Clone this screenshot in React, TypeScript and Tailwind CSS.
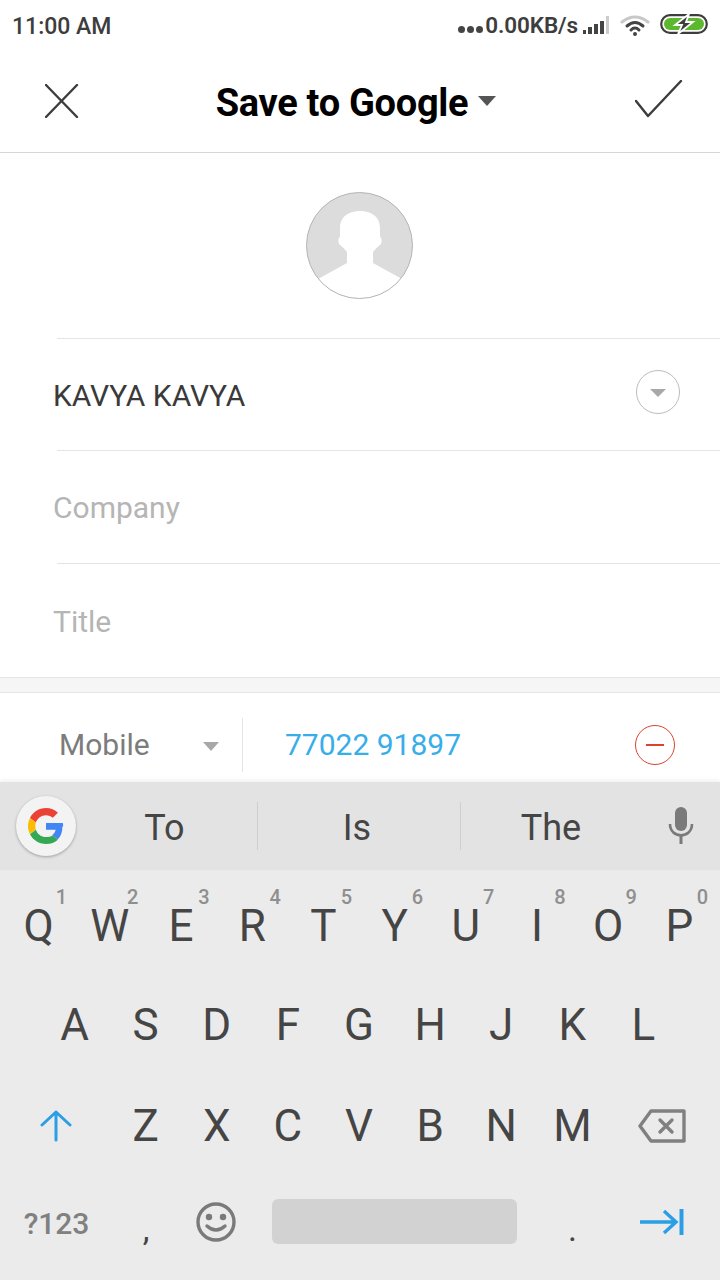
import React from "react"

const font = "font-['Roboto',sans-serif]"

function Key({ label, hint }: { label: string; hint?: string }) {
  return (
    <div className="relative flex-1 flex items-center justify-center text-[44px] leading-none text-[#454545]">
      {label}
      {hint && <span className="absolute top-[11px] right-[7px] text-[20px] leading-none font-medium text-[#8f8f8f]">{hint}</span>}
    </div>
  )
}

function StatusBar() {
  return (
    <div className="h-[52px] flex items-center justify-between pl-[12px] pr-[12px] text-[#3d3d3d] font-medium">
      <span className="text-[23px] mt-[2px]">11:00 AM</span>
      <div className="flex items-center">
        <div className="flex gap-[2px] mt-[6px] mr-[2px]">
          <div className="w-[7px] h-[7px] rounded-full bg-[#444]" />
          <div className="w-[7px] h-[7px] rounded-full bg-[#444]" />
          <div className="w-[7px] h-[7px] rounded-full bg-[#444]" />
        </div>
        <span className="text-[22.5px] font-semibold tracking-[-0.1px]">0.00KB/s</span>
        <svg width="28" height="22" viewBox="0 0 28 22" className="ml-[4px]">
          <rect x="1" y="15" width="3" height="4" fill="#444" />
          <rect x="6" y="12" width="4" height="7" fill="#444" />
          <rect x="12" y="9" width="4" height="10" fill="#444" />
          <rect x="18" y="6" width="4" height="13" fill="#444" />
          <rect x="24" y="1" width="3" height="18" fill="#ccc" />
        </svg>
        <svg width="30" height="24" viewBox="0 0 30 24" className="ml-[10px]" fill="none" strokeLinecap="round">
          <path d="M2 8 Q15 -2 28 8" stroke="#c8c8c8" strokeWidth="3" />
          <path d="M7 12 Q15 5 23 12" stroke="#444" strokeWidth="3" />
          <path d="M11 16 Q15 12 19 16" stroke="#444" strokeWidth="3" />
          <circle cx="15" cy="20" r="2" fill="#444" />
        </svg>
        <svg width="48" height="20" viewBox="0 0 48 20" className="ml-[10px] mt-[-4px]">
          <rect x="1.2" y="1.2" width="45.6" height="17.6" rx="8.800" fill="none" stroke="#3d3d3d" strokeWidth="2.200" />
          <rect x="4" y="4" width="40" height="12" rx="6" fill="#5cb82c" />
          <path d="M29 0 L15 11 H22 L18 20 L33 8 H26 Z" fill="#3d3d3d" stroke="#fff" strokeWidth="1.800" />
        </svg>
      </div>
    </div>
  )
}

function Header() {
  return (
    <div className="h-[101px] relative flex items-center justify-between pl-[45px] pr-[37px] border-b border-[#d6d6d6]">
      <svg width="34" height="34" viewBox="0 0 34 34" className="mt-[-2px]" stroke="#3c3c3c" strokeWidth="2.400" strokeLinecap="round">
        <path d="M1 1 L32 33 M32 1 L1 33" />
      </svg>
      <div className="flex items-center ml-[-2px] mt-[2px]">
        <span className="text-[38px] leading-none font-bold text-black tracking-[-0.3px]">Save to Google</span>
        <div className="ml-[10px] mb-[4px] w-0 h-0 border-x-[9px] border-x-transparent border-t-[10px] border-t-[#555]" />
      </div>
      <svg width="48" height="40" viewBox="0 0 48 40" className="mt-[-4px]" fill="none" stroke="#3c3c3c" strokeWidth="2.400" strokeLinecap="round" strokeLinejoin="round">
        <path d="M1 21 L13 36 L46 1" />
      </svg>
    </div>
  )
}

function Avatar() {
  return (
    <svg width="107" height="107" viewBox="0 0 107 107">
      <defs>
        <clipPath id="avatarClip"><circle cx="53.500" cy="53.500" r="53" /></clipPath>
      </defs>
      <g clipPath="url(#avatarClip)">
        <rect width="107" height="107" fill="#dcdcdc" />
        <path d="M54 19 C44 19 34 24 34 36 L34 45 C32 46 32 50 33 52 C36 55 39 57 41 60 L41 71 L12 87 L12 107 L96 107 L96 87 L67 71 L67 60 C69 57 72 55 75 52 C76 50 76 46 74 45 L74 36 C74 24 64 19 54 19 Z" fill="#fff" />
      </g>
      <circle cx="53.500" cy="53.500" r="53" fill="none" stroke="#b4b4b4" strokeWidth="1" />
    </svg>
  )
}

function FieldRow({ text, muted, height }: { text: string; muted?: boolean; height: string }) {
  return (
    <div className={`${height} ml-[57px] border-t border-[#e4e4e4] flex items-center justify-between pr-[40px]`}>
      <span className={`ml-[-4px] mt-[2px] text-[30px] leading-none ${muted ? "text-[#b5b5b5]" : "text-[#3a3a3a]"}`}>{text}</span>
      {!muted && (
        <div className="mt-[-6px] w-[44px] h-[44px] rounded-full border border-[#bdbdbd] flex items-center justify-center">
          <div className="mt-[2px] w-0 h-0 border-x-[8px] border-x-transparent border-t-[8px] border-t-[#a8a8a8]" />
        </div>
      )}
    </div>
  )
}

function SuggestionBar() {
  return (
    <div className="h-[88px] bg-[#e3e3e3] flex items-center relative shadow-[0_-2px_4px_rgba(0,0,0,0.06)]">
      <div className="ml-[16px] w-[60px] h-[60px] rounded-full bg-[#f3f3f3] shadow-[0_1px_3px_rgba(0,0,0,0.3)] flex items-center justify-center">
        <svg width="36" height="36" viewBox="0 0 48 48">
          <path fill="#EA4335" d="M24 9.500c3.500 0 6.700 1.300 9.100 3.600l6.800-6.800C35.800 2.500 30.300 0 24 0 14.600 0 6.500 5.400 2.600 13.200l7.900 6.100C12.400 13.700 17.700 9.500 24 9.500z" />
          <path fill="#4285F4" d="M46.900 24.500c0-1.600-.1-3.100-.4-4.500H24v9h12.900c-.6 3-2.200 5.500-4.700 7.200l7.300 5.700c4.300-4 6.400-9.800 6.400-17.400z" />
          <path fill="#FBBC05" d="M10.500 28.700c-.5-1.500-.8-3-.8-4.700s.3-3.200.8-4.700l-7.900-6.100C.9 16.500 0 20.100 0 24s.9 7.500 2.600 10.800l7.900-6.100z" />
          <path fill="#34A853" d="M24 48c6.500 0 11.900-2.100 15.900-5.800l-7.300-5.700c-2.200 1.500-5 2.300-8.600 2.300-6.300 0-11.600-4.200-13.500-9.900l-7.900 6.100C6.500 42.600 14.600 48 24 48z" />
        </svg>
      </div>
      <div className="flex-1 flex items-center text-[36px] text-[#454545] leading-none h-[48px]">
        <div className="w-[177px] flex justify-center pt-[4px]">To</div>
        <div className="ml-[4px] w-[204px] h-[48px] pr-[4px] border-x border-[#cfcfcf] flex items-center justify-center pt-[4px]">Is</div>
        <div className="w-[180px] flex justify-center pt-[4px]">The</div>
      </div>
      <svg width="30" height="38" viewBox="0 0 30 38" className="mr-[24px]" fill="none">
        <rect x="9" y="0" width="12" height="24" rx="6" fill="#7a7a7a" />
        <path d="M4 17 C4 32 26 32 26 17" stroke="#7a7a7a" strokeWidth="2.600" />
        <path d="M15 28 V37" stroke="#7a7a7a" strokeWidth="3" />
      </svg>
    </div>
  )
}

function Keyboard() {
  return (
    <div className="flex-1 bg-[#ebebeb] flex flex-col">
      <div className="h-[106px] pt-[6px] pl-[3px] pr-[5px] flex">
        {"QWERTYUIOP".split("").map((k, i) => (
          <div key={k} className="relative flex-1 flex">
            <Key label={k} hint={String((i + 1) % 10)} />
          </div>
        ))}
      </div>
      <div className="h-[98px] pl-[39px] pr-[41px] flex">
        {"ASDFGHJKL".split("").map(k => <Key key={k} label={k} />)}
      </div>
      <div className="h-[103px] pl-[4px] pr-[4px] flex">
        <div className="w-[104px] flex items-center justify-center">
          <svg width="32" height="32" viewBox="0 0 32 32" fill="none" stroke="#2b9fe6" strokeWidth="3" strokeLinecap="round" strokeLinejoin="round">
            <path d="M16 30 V2 M2 15 L16 2 L30 15" />
          </svg>
        </div>
        <div className="ml-[2px] w-[498px] flex">
          {"ZXCVBNM".split("").map(k => <Key key={k} label={k} />)}
        </div>
        <div className="w-[108px] flex items-center justify-center">
          <svg width="48" height="34" viewBox="0 0 48 34" fill="none" stroke="#808080" strokeWidth="3.400" strokeLinejoin="round">
            <path d="M13 2 H46 V32 H13 L2 17 Z" />
            <path d="M22 11 L34 23 M34 11 L22 23" strokeLinecap="round" />
          </svg>
        </div>
      </div>
      <div className="flex-1 flex items-center pb-[14px]">
        <div className="w-[113px] text-center text-[30px] font-medium text-[#808080] mt-[3px]">?123</div>
        <div className="w-[66px] text-center text-[34px] leading-none text-[#454545] mt-[14px]">,</div>
        <div className="w-[74px] flex justify-center">
          <svg width="40" height="40" viewBox="0 0 40 40" fill="none" stroke="#7a7a7a" strokeWidth="3.400" strokeLinecap="round">
            <circle cx="20" cy="20" r="18" />
            <path d="M11 24 Q20 32 29 24" />
            <circle cx="13" cy="15" r="1.500" fill="#7a7a7a" />
            <circle cx="27" cy="15" r="1.500" fill="#7a7a7a" />
          </svg>
        </div>
        <div className="ml-[19px] w-[245px] h-[45px] rounded-[6px] bg-[#d2d2d2]" />
        <div className="w-[111px] text-center text-[34px] leading-none text-[#454545] mt-[14px]">.</div>
        <svg width="44" height="26" viewBox="0 0 44 26" fill="none" stroke="#2b9fe6" strokeWidth="3.400" className="ml-[12px]">
          <path d="M0 13 H36 M24 2 L36 13 L24 24" />
          <path d="M41.500 0 V26" strokeWidth="4" />
        </svg>
      </div>
    </div>
  )
}

export default function App() {
  return (
    <div className={`${font} w-[720px] h-[1280px] overflow-hidden bg-white flex flex-col`}>
      <StatusBar />
      <Header />
      <div className="h-[185px] flex justify-center pt-[39px] pr-[1px]">
        <Avatar />
      </div>
      <FieldRow text="KAVYA KAVYA" height="h-[112px]" />
      <FieldRow text="Company" muted height="h-[113px]" />
      <FieldRow text="Title" muted height="h-[114px]" />
      <div className="h-[16px] bg-[#f6f6f6] border-y border-[#e4e4e4]" />
      <div className="h-[89px] flex items-center pt-[15px]">
        <div className="w-[243px] h-[54px] border-r border-[#e4e4e4] flex items-center pl-[59px]">
          <span className="text-[30px] leading-none text-[#7c7c7c]">Mobile</span>
          <div className="ml-[53px] mt-[2px] w-0 h-0 border-x-[8px] border-x-transparent border-t-[9px] border-t-[#a8a8a8]" />
        </div>
        <span className="ml-[42px] text-[30px] leading-none text-[#37aeea]">77022 91897</span>
        <div className="ml-auto mr-[45px] w-[40px] h-[40px] rounded-full border border-[#d9432f] flex items-center justify-center">
          <div className="w-[18px] h-[2px] bg-[#d9432f]" />
        </div>
      </div>
      <SuggestionBar />
      <Keyboard />
    </div>
  )
}
